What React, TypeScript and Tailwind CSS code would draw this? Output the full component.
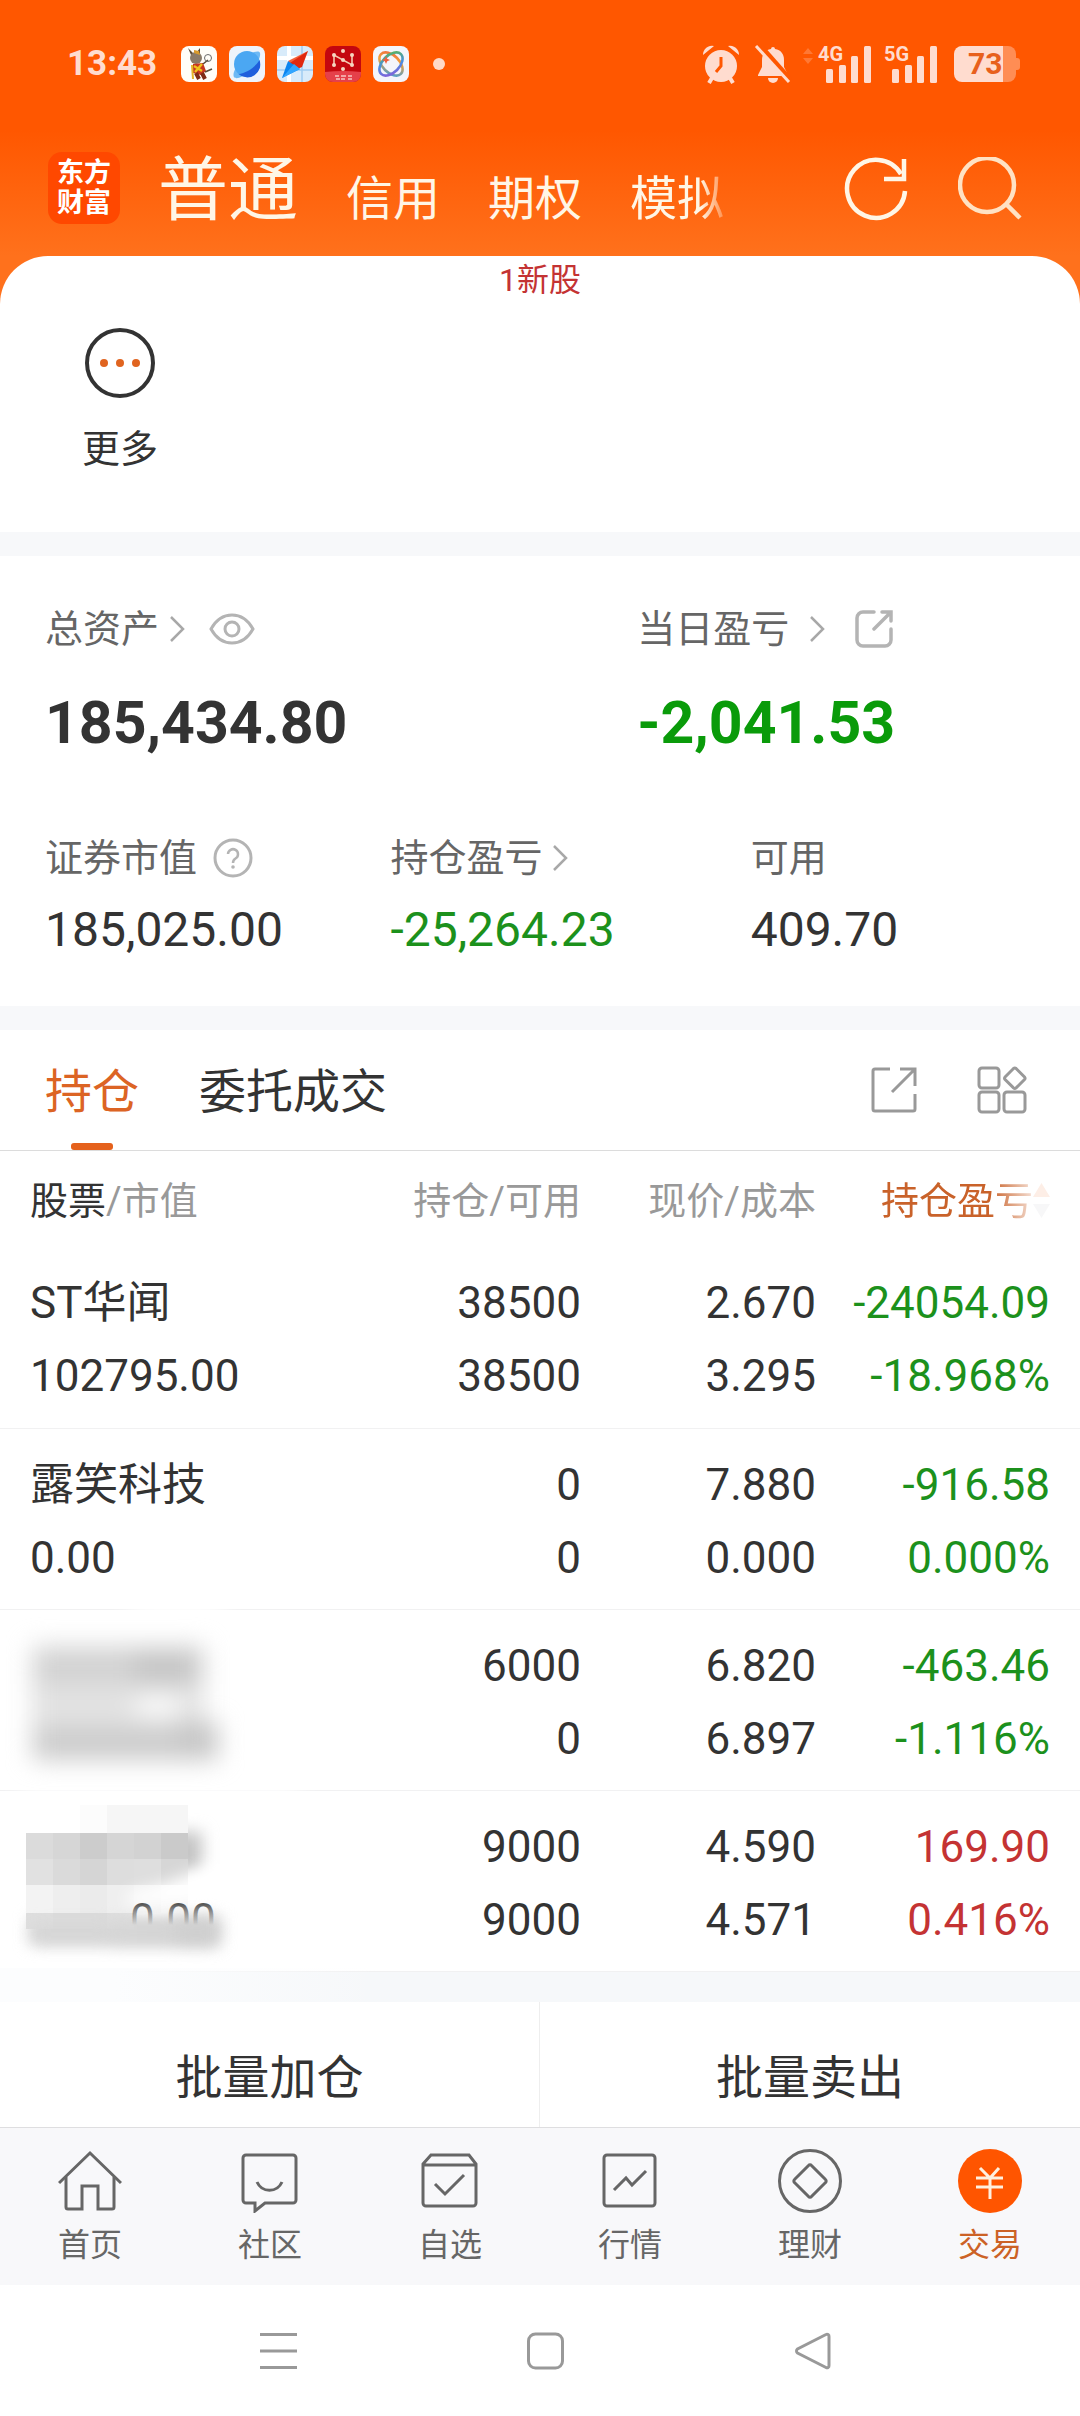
import { useState, type ReactNode } from "react";

interface Holding {
  id: string;
  name?: string;
  marketValue?: string;
  position: string;
  available: string;
  price: string;
  cost: string;
  profit: string;
  profitRate: string;
  up: boolean;
}

const HOLDINGS: Holding[] = [
  {
    id: "st-huawen",
    name: "ST华闻",
    marketValue: "102795.00",
    position: "38500",
    available: "38500",
    price: "2.670",
    cost: "3.295",
    profit: "-24054.09",
    profitRate: "-18.968%",
    up: false,
  },
  {
    id: "luxiao",
    name: "露笑科技",
    marketValue: "0.00",
    position: "0",
    available: "0",
    price: "7.880",
    cost: "0.000",
    profit: "-916.58",
    profitRate: "0.000%",
    up: false,
  },
  {
    id: "hidden-1",
    position: "6000",
    available: "0",
    price: "6.820",
    cost: "6.897",
    profit: "-463.46",
    profitRate: "-1.116%",
    up: false,
  },
  {
    id: "hidden-2",
    position: "9000",
    available: "9000",
    price: "4.590",
    cost: "4.571",
    profit: "169.90",
    profitRate: "0.416%",
    up: true,
  },
];

const ACCOUNT_TABS = ["信用", "期权", "模拟"];

/* ---------- small icons ---------- */

function Chevron() {
  return (
    <svg width="16" height="28" viewBox="0 0 16 28" fill="none" stroke="#a8a8a8" strokeWidth="2.5">
      <path d="M2 2l12 12L2 26" />
    </svg>
  );
}

function EyeIcon() {
  return (
    <svg width="46" height="32" viewBox="0 0 46 32" fill="none" stroke="#b4b4b4" strokeWidth="3">
      <path d="M2 16C7 7 14 2 23 2s16 5 21 14c-5 9-12 14-21 14S7 25 2 16z" />
      <circle cx="23" cy="16" r="7" />
    </svg>
  );
}

function ShareIcon({ rounded = false }: { rounded?: boolean }) {
  if (rounded) {
    return (
      <svg
        width="38"
        height="38"
        viewBox="0 0 38 38"
        fill="none"
        stroke="#b4b4b4"
        strokeWidth="3.5"
        strokeLinecap="round"
      >
        <path d="M19 2H8a6 6 0 0 0-6 6v22a6 6 0 0 0 6 6h22a6 6 0 0 0 6-6V19" />
        <path d="M27 2h9v9M36 2L19 19" />
      </svg>
    );
  }
  return (
    <svg width="46" height="46" viewBox="0 0 46 46" fill="none" stroke="#999" strokeWidth="3">
      <path d="M19 2H4a2 2 0 0 0-2 2v38a2 2 0 0 0 2 2h38a2 2 0 0 0 2-2V27" />
      <path d="M29 2h15v17M44 2L21 25" />
    </svg>
  );
}

function GridIcon() {
  return (
    <svg width="50" height="48" viewBox="0 0 50 48" fill="none" stroke="#999" strokeWidth="3">
      <rect x="2" y="2" width="20" height="20" rx="3" />
      <rect x="2" y="26" width="20" height="20" rx="3" />
      <rect x="27" y="26" width="21" height="20" rx="3" />
      <path d="M36.5 2.5a2 2 0 0 1 2.6 0l8.4 8.4a2 2 0 0 1 0 2.6l-8.4 8.4a2 2 0 0 1-2.6 0l-8.4-8.4a2 2 0 0 1 0-2.6z" />
    </svg>
  );
}

function HelpIcon() {
  return (
    <svg width="40" height="40" viewBox="0 0 40 40" fill="none" stroke="#b4b4b4" strokeWidth="3">
      <circle cx="20" cy="20" r="18" />
      <path d="M15 16a5 5 0 1 1 7.5 4.5c-1.7 1-2.5 2-2.5 4.5" strokeWidth="2.5" />
      <circle cx="20" cy="29" r="1.8" fill="#b4b4b4" stroke="none" />
    </svg>
  );
}

/* ---------- status bar ---------- */

function AppTiles() {
  return (
    <svg width="266" height="38" viewBox="0 0 266 38">
      <defs>
        <linearGradient id="knotA" x1="0" y1="0" x2="1" y2="1">
          <stop offset="0" stopColor="#f0603f" />
          <stop offset="0.4" stopColor="#f2a33a" />
          <stop offset="1" stopColor="#2f9be8" />
        </linearGradient>
        <linearGradient id="knotB" x1="1" y1="0" x2="0" y2="1">
          <stop offset="0" stopColor="#58b947" />
          <stop offset="0.5" stopColor="#4a8fe0" />
          <stop offset="1" stopColor="#8f55d8" />
        </linearGradient>
      </defs>
      {/* mascot */}
      <rect x="0" y="1" width="36" height="36" rx="8" fill="#fffdf8" />
      <path d="M10 10l-3-7 5 5 4-1 3-4 0 7z" fill="#5a4a35" />
      <ellipse cx="15" cy="13" rx="6" ry="6" fill="#8a7a68" />
      <path d="M13 5l5 1 1 4-6-2z" fill="#d89a2c" />
      <path d="M12 19l10-1 3 8-5 4-8-2z" fill="#c8371f" />
      <path d="M13 21l8 5M21 19l-7 8" stroke="#f0c31c" strokeWidth="2.4" />
      <path d="M15 28l3 6M21 28l3 6" stroke="#7d2b16" strokeWidth="4" />
      <path d="M11 20l1 14" stroke="#e5b72a" strokeWidth="2" />
      <path d="M22 19l5-4M24 27l7-3" stroke="#5a4a35" strokeWidth="1.6" />
      <circle cx="27" cy="13" r="3.5" fill="none" stroke="#6b6b6b" strokeWidth="1" />
      {/* planet */}
      <rect x="48" y="1" width="36" height="36" rx="8" fill="#eef4fb" />
      <path d="M53 32c-2-3 2-12 10-19s16-8 16-5c1 4-3 12-10 18s-14 9-16 6z" fill="#6db9f5" />
      <circle cx="66" cy="19" r="13" fill="#4ba7f2" />
      <path d="M78.5 15a13 13 0 0 1-21 14c8-1 17-7 21-14z" fill="#1f5fdc" />
      {/* compass */}
      <rect x="96" y="1" width="36" height="36" rx="8" fill="#d8ebfa" />
      <path d="M108 1v36M96 13h36" stroke="#fff" strokeWidth="4" />
      <path d="M121 1v36M96 25h36" stroke="#9fcdf2" strokeWidth="1.5" />
      <path d="M127 6l-20 10 7 8z" fill="#f4603a" />
      <path d="M127 6l-6 16-7 3-5-7z" fill="#e0280f" />
      <path d="M101 33l6-17 12 8z" fill="#0a85f0" />
      <path d="M101 33l18-9-6-5z" fill="#32a6ff" />
      {/* network */}
      <rect x="144" y="1" width="36" height="36" rx="8" fill="#c4070f" />
      <path d="M144 27q18-2 36 0v2a8 8 0 0 1-8 8h-20a8 8 0 0 1-8-8z" fill="#e5404a" />
      <path d="M153 20V10l18 10V10" fill="none" stroke="#f6c9b0" strokeWidth="1.6" />
      <g fill="#f6d5c0">
        <circle cx="153" cy="10" r="2" />
        <circle cx="153" cy="20" r="2" />
        <circle cx="171" cy="10" r="2" />
        <circle cx="171" cy="20" r="2" />
        <circle cx="162" cy="6" r="2" />
        <circle cx="162" cy="15" r="2" />
        <circle cx="162" cy="24" r="2" />
      </g>
      <path d="M154 31h4M155 34h4M160 31h5M160 34h4M167 31h4M167 34h4" stroke="#f8c4c0" strokeWidth="1.6" />
      {/* knot */}
      <rect x="192" y="1" width="36" height="36" rx="8" fill="#f4f5fb" />
      <g fill="none" strokeWidth="2.6">
        <ellipse cx="210" cy="19" rx="14" ry="8.5" transform="rotate(45 210 19)" stroke="url(#knotA)" />
        <ellipse cx="210" cy="19" rx="14" ry="8.5" transform="rotate(-45 210 19)" stroke="url(#knotB)" />
      </g>
      <path d="M205 11l1.2 2.8 2.8 1.2-2.8 1.2-1.2 2.8-1.2-2.8-2.8-1.2 2.8-1.2z" fill="#f0603f" />
      <circle cx="258" cy="19" r="6" fill="#ffd9c7" />
    </svg>
  );
}

function SignalBars({ label }: { label: string }) {
  return (
    <div className="relative h-[38px] w-[54px]">
      <span className="absolute top-0 left-0 text-[20px] leading-[18px] font-bold">{label}</span>
      <svg className="absolute right-0 bottom-0" width="46" height="38" viewBox="0 0 46 38" fill="currentColor">
        <rect x="0" y="24" width="7" height="14" rx="1.5" />
        <rect x="13" y="20" width="7" height="18" rx="1.5" />
        <rect x="25" y="11" width="7" height="27" rx="1.5" />
        <rect x="38" y="1" width="7" height="37" rx="1.5" />
      </svg>
    </div>
  );
}

function StatusBar() {
  return (
    <div className="flex h-[128px] items-center justify-between pr-[60px] pl-[67px] text-[#ffdccf]">
      <div className="flex items-center">
        <time className="w-[114px] text-[35px] leading-[40px] font-bold">13:43</time>
        <AppTiles />
      </div>
      <div className="flex items-center">
        <svg width="38" height="40" viewBox="0 0 38 40" fill="currentColor">
          <circle cx="19" cy="22" r="16" />
          <path d="M1 11a9 9 0 0 1 11-9zM37 11a9 9 0 0 0-11-9z" />
          <path d="M10 34l-3 5M28 34l3 5" stroke="currentColor" strokeWidth="4" />
          <path d="M19 13v9l-5 6" fill="none" stroke="#ff5700" strokeWidth="3" />
        </svg>
        <svg className="ml-3.5" width="38" height="38" viewBox="0 0 38 38" fill="currentColor">
          <path d="M19 2a2 2 0 0 1 2 2c6 1 9 5 9 11v7l4 8v1H4v-1l4-8v-7c0-6 3-10 9-11a2 2 0 0 1 2-2z" />
          <path d="M14 33h10a5 5 0 0 1-10 0z" />
          <path d="M5 0l31 35" stroke="#ff5700" strokeWidth="6" />
          <path d="M2 1l33 36" stroke="currentColor" strokeWidth="3" />
        </svg>
        <svg className="mb-4 ml-2.5 opacity-25" width="12" height="16" viewBox="0 0 12 16" fill="currentColor">
          <path d="M6 0l5 6H1zM6 16l5-6H1z" />
        </svg>
        <div className="ml-1 flex gap-3">
          <SignalBars label="4G" />
          <SignalBars label="5G" />
        </div>
        <div className="relative ml-4 h-9 w-[66px]">
          <svg width="66" height="36" viewBox="0 0 66 36">
            <path d="M48 0h6a8 8 0 0 1 8 8v20a8 8 0 0 1-8 8h-6z" fill="#ff8d54" />
            <path d="M62 12h1a3 3 0 0 1 3 3v6a3 3 0 0 1-3 3h-1z" fill="#ff8d54" />
            <path d="M8 0h41v36H8a8 8 0 0 1-8-8V8a8 8 0 0 1 8-8z" fill="#ffdccf" />
          </svg>
          <span className="absolute inset-y-0 left-3.5 text-[30px] leading-[36px] font-bold text-[#e8601c]">
            73
          </span>
        </div>
      </div>
    </div>
  );
}

/* ---------- header ---------- */

function Header() {
  return (
    <header className="flex h-[128px] items-center pr-[58px] pb-2 pl-12 text-[#fff6e6]">
      <div className="flex size-[72px] flex-col items-center justify-center rounded-[14px] bg-[#ff4800] text-[27px] leading-[30px] font-bold text-white">
        <span>东方</span>
        <span>财富</span>
      </div>
      <nav className="ml-[38px] flex flex-1 items-baseline gap-12 pt-3.5">
        <button className="text-[70px] leading-[88px]">普通</button>
        {ACCOUNT_TABS.map((tab) => (
          <button
            key={tab}
            className="text-[47px] leading-[88px] last:[mask-image:linear-gradient(90deg,#000_75%,transparent_110%)]"
          >
            {tab}
          </button>
        ))}
      </nav>
      <div className="flex items-center gap-[50px] pt-0.5">
        <button aria-label="刷新">
          <svg width="64" height="64" viewBox="0 0 64 64" fill="none" stroke="currentColor" strokeWidth="4.5">
            <path d="M61 34A29 29 0 1 1 57 17" />
            <path d="M60 2v20H40" />
          </svg>
        </button>
        <button aria-label="搜索">
          <svg width="64" height="64" viewBox="0 0 64 64" fill="none" stroke="#ffe2c4" strokeWidth="4.5">
            <circle cx="29" cy="28" r="27" />
            <path d="M48 47l14 14" />
          </svg>
        </button>
      </div>
    </header>
  );
}

/* ---------- assets ---------- */

function AssetLabel({ children }: { children: ReactNode }) {
  return <div className="flex h-[46px] items-center text-[38px] leading-[46px] text-[#666]">{children}</div>;
}

function Assets() {
  return (
    <section className="pt-[50px] pr-12 pb-11 pl-[45px]">
      <div className="grid grid-cols-[60%_40%]">
        <div>
          <AssetLabel>
            <span>总资产</span>
            <span className="ml-2.5">
              <Chevron />
            </span>
            <button className="ml-6" aria-label="隐藏金额">
              <EyeIcon />
            </button>
          </AssetLabel>
          <p className="mt-[39px] text-[59px] leading-[64px] font-bold text-[#333]">185,434.80</p>
        </div>
        <div>
          <AssetLabel>
            <span>当日盈亏</span>
            <span className="ml-5">
              <Chevron />
            </span>
            <button className="ml-[30px]" aria-label="分享">
              <ShareIcon rounded />
            </button>
          </AssetLabel>
          <p className="mt-[39px] text-[59px] leading-[64px] font-bold text-[#0a9b0a]">-2,041.53</p>
        </div>
      </div>
      <div className="mt-20 grid grid-cols-[35%_36.5%_auto] text-[48px] leading-[64px] text-[#333]">
        <div>
          <AssetLabel>
            <span>证券市值</span>
            <button className="ml-4" aria-label="说明">
              <HelpIcon />
            </button>
          </AssetLabel>
          <p className="mt-[17px]">185,025.00</p>
        </div>
        <div>
          <AssetLabel>
            <span>持仓盈亏</span>
            <span className="ml-2.5">
              <Chevron />
            </span>
          </AssetLabel>
          <p className="mt-[17px] text-[#1c911c]">-25,264.23</p>
        </div>
        <div>
          <AssetLabel>可用</AssetLabel>
          <p className="mt-[17px]">409.70</p>
        </div>
      </div>
    </section>
  );
}

/* ---------- holdings ---------- */

// Mosaic and smudges laid over the names of the hidden holdings
const MOSAIC: { y: number; h: number; fills: string[] }[] = [
  { y: 213, h: 28, fills: ["#ffffff", "#ffffff", "#fcfcfc", "#f6f6f6", "#f6f6f6", "#f6f6f6"] },
  { y: 241, h: 26, fills: ["#dbdbdb", "#d6d6d6", "#cccccc", "#d5d5d5", "#d2d2d2", "#cacaca"] },
  { y: 267, h: 26, fills: ["#e1e1e1", "#dadada", "#d5d5d5", "#dddddd", "#dedede", "#d6d6d6"] },
  { y: 293, h: 28, fills: ["#f3f3f3", "#eeeeee", "#ebebeb", "#efefef", "#f2f2f2", "#f6f6f6"] },
  { y: 321, h: 16, fills: ["#dedede", "#dbdbdb", "#dbdbdb", "#dedede"] },
];

function Redaction() {
  return (
    <svg
      className="pointer-events-none absolute bottom-0 left-0"
      width="380"
      height="410"
      viewBox="0 0 380 410"
      aria-hidden="true"
    >
      <defs>
        <filter id="soft" x="-40%" y="-100%" width="180%" height="300%" colorInterpolationFilters="sRGB">
          <feGaussianBlur stdDeviation="12" />
        </filter>
        <filter id="edge" x="-40%" y="-100%" width="180%" height="300%" colorInterpolationFilters="sRGB">
          <feGaussianBlur stdDeviation="8" />
        </filter>
        <linearGradient id="digits" x1="0" y1="312" x2="0" y2="333" gradientUnits="userSpaceOnUse">
          <stop offset="0" stopColor="#444" stopOpacity="0.9" />
          <stop offset="1" stopColor="#444" stopOpacity="0" />
        </linearGradient>
        <linearGradient id="bandFade" x1="0" y1="0" x2="1" y2="0">
          <stop offset="0.3" stopColor="#fcfdfe" />
          <stop offset="1" stopColor="#fcfdfe" stopOpacity="0" />
        </linearGradient>
      </defs>
      <rect x="0" y="376" width="380" height="34" fill="url(#bandFade)" />
      <g filter="url(#soft)">
        <rect x="130" y="8" width="95" height="30" fill="#fff" />
        <rect x="20" y="190" width="280" height="24" fill="#fff" />
      </g>
      <g filter="url(#soft)">
        <rect x="32" y="54" width="172" height="112" fill="#e2e2e2" />
        <rect x="34" y="56" width="168" height="36" fill="#d2d2d2" />
        <rect x="134" y="60" width="62" height="30" fill="#c4c4c4" />
        <rect x="34" y="136" width="184" height="32" fill="#cbcbcb" />
        <rect x="180" y="130" width="38" height="36" fill="#c6c6c6" />
        <ellipse cx="158" cy="114" rx="26" ry="10" fill="#fff" />
      </g>
      <g filter="url(#edge)">
        <path d="M160 240h42v40h-42z" fill="#c4c4c4" />
        <rect x="30" y="326" width="190" height="26" fill="#d4d4d4" />
      </g>
      {MOSAIC.map((row) =>
        row.fills.map((fill, i) => (
          <rect key={`${row.y}-${i}`} x={26 + i * 27} y={row.y} width="27" height={row.h} fill={fill} />
        )),
      )}
      <g filter="url(#edge)">
        <path d="M126 302l32-8 36-14 34-14-2 32-42 12-56 4z" fill="#fff" />
        <rect x="110" y="330" width="108" height="22" fill="#d4d4d4" />
        <rect x="176" y="326" width="42" height="28" fill="#cfcfcf" />
        <rect x="32" y="334" width="110" height="16" fill="#d6d6d6" />
      </g>
      <text x="130" y="343" fontSize="44" fill="url(#digits)">
        0.00
      </text>
    </svg>
  );
}

function HoldingsTable() {
  return (
    <div className="relative">
      <table className="w-full table-fixed border-collapse text-right text-[#333]">
        <colgroup>
          <col className="w-[31%]" />
          <col />
          <col className="w-[235px]" />
          <col className="w-[264px]" />
        </colgroup>
        <thead className="text-[38px] leading-[46px] text-[#999]">
          <tr className="h-24">
            <th className="pt-1 pl-[30px] text-left font-normal">
              <span className="text-[#333]">股票</span>/市值
            </th>
            <th className="pt-1 font-normal">持仓/可用</th>
            <th className="pt-1 font-normal">现价/成本</th>
            <th className="pt-1 pr-[30px] font-normal">
              <button className="flex w-full items-center justify-end text-[#c9622a]">
                <span className="[mask-image:linear-gradient(90deg,#000_72%,rgba(0,0,0,0.2)_100%)]">持仓盈亏</span>
                <svg width="17" height="36" viewBox="0 0 17 36">
                  <path d="M8.5 0L17 14H0z" fill="#fdeee6" />
                  <path d="M8.5 35L17 21H0z" fill="#f7f7f8" />
                </svg>
              </button>
            </th>
          </tr>
        </thead>
        <tbody className="text-[44px] leading-[73px]">
          {HOLDINGS.map((item) => (
            <tr key={item.id} className="h-[181px] border-b border-[#f1f1f2]">
              <td className="pt-1.5 pl-[30px] text-left">
                <div>{item.name}</div>
                <div>{item.marketValue}</div>
              </td>
              <td className="pt-1.5">
                <div>{item.position}</div>
                <div>{item.available}</div>
              </td>
              <td className="pt-1.5">
                <div>{item.price}</div>
                <div>{item.cost}</div>
              </td>
              <td className={item.up ? "pt-1.5 pr-[30px] text-[#c43333]" : "pt-1.5 pr-[30px] text-[#1c911c]"}>
                <div>{item.profit}</div>
                <div>{item.profitRate}</div>
              </td>
            </tr>
          ))}
        </tbody>
      </table>
      <div className="h-[30px] bg-[#f6f8fa]" />
      <Redaction />
    </div>
  );
}

function Holdings() {
  const [tab, setTab] = useState("持仓");

  return (
    <section>
      <div className="flex h-[121px] items-stretch border-b border-[#dcdcdc] pr-[53px] pl-[45px]">
        <div className="flex flex-1 gap-[60px]">
          {["持仓", "委托成交"].map((name) => (
            <button
              key={name}
              onClick={() => setTab(name)}
              className={
                tab === name
                  ? "relative pt-1 text-[47px] leading-[60px] text-[#dc6424]"
                  : "relative pt-1 text-[47px] leading-[60px] text-[#333]"
              }
            >
              {name}
              {tab === name && (
                <span className="absolute bottom-0 left-1/2 h-[7px] w-[42px] -translate-x-1/2 rounded-[3px] bg-[#e5611c]" />
              )}
            </button>
          ))}
        </div>
        <div className="flex items-center gap-[60px]">
          <button aria-label="分享持仓">
            <ShareIcon />
          </button>
          <button aria-label="更多功能">
            <GridIcon />
          </button>
        </div>
      </div>
      <HoldingsTable />
      <div className="grid h-[125px] grid-cols-2 text-[47px] leading-[60px] text-[#333]">
        <button className="border-r border-[#eee] pt-7">批量加仓</button>
        <button className="pt-7">批量卖出</button>
      </div>
    </section>
  );
}

/* ---------- bottom navigation ---------- */

const NAV_ITEMS: { label: string; active?: boolean; icon: ReactNode }[] = [
  {
    label: "首页",
    icon: (
      <>
        <path d="M1 34L32 4l31 30" />
        <path d="M8 28v30a2 2 0 0 0 2 2h14V37h16v23h14a2 2 0 0 0 2-2V28" />
      </>
    ),
  },
  {
    label: "社区",
    icon: (
      <>
        <path d="M8 6h47a3 3 0 0 1 3 3v42a3 3 0 0 1-3 3H27l-10 8V54H8a3 3 0 0 1-3-3V9a3 3 0 0 1 3-3z" />
        <path d="M19 33c5 11 20 11 25 0" />
      </>
    ),
  },
  {
    label: "自选",
    icon: (
      <>
        <path d="M5 15l8-9h38l7 9v39a3 3 0 0 1-3 3H8a3 3 0 0 1-3-3zM5 16h53" />
        <path d="M17 35l10 10 19-19" />
      </>
    ),
  },
  {
    label: "行情",
    icon: (
      <>
        <rect x="6" y="6" width="51" height="51" rx="3" />
        <path d="M16 41l12-12 6 7 14-14" />
      </>
    ),
  },
  {
    label: "理财",
    icon: (
      <>
        <circle cx="32" cy="32" r="30.5" />
        <path d="M30.5 16.5a2 2 0 0 1 3 0l14 14a2 2 0 0 1 0 3l-14 14a2 2 0 0 1-3 0l-14-14a2 2 0 0 1 0-3z" />
      </>
    ),
  },
  {
    label: "交易",
    active: true,
    icon: (
      <>
        <circle cx="32" cy="32" r="32" fill="#ff5500" stroke="none" />
        <path d="M22 19l10 10 9-10M32 29v21M18 29h27M18 38h27" stroke="#fff0df" />
      </>
    ),
  },
];

function TabBar() {
  return (
    <nav className="grid grid-cols-6 border-t border-[#dedee0] bg-[#f8f8fa] pt-[21px] pb-5">
      {NAV_ITEMS.map((item) => (
        <a
          key={item.label}
          href="#"
          className={
            item.active
              ? "flex flex-col items-center gap-3 text-[#cc6226]"
              : "flex flex-col items-center gap-3 text-[#666]"
          }
        >
          <svg width="64" height="64" viewBox="0 0 64 64" fill="none" stroke="currentColor" strokeWidth="3">
            {item.icon}
          </svg>
          <span className="text-[32px] leading-[40px]">{item.label}</span>
        </a>
      ))}
    </nav>
  );
}

function SystemBar() {
  return (
    <div className="flex h-[132px] items-center justify-center gap-[230px] pl-2.5">
      <button aria-label="最近任务">
        <svg width="37" height="38" viewBox="0 0 37 38" stroke="#999" strokeWidth="3">
          <path d="M0 2.5h37M0 19h37M0 35.5h37" />
        </svg>
      </button>
      <button aria-label="主屏幕">
        <svg width="37" height="38" viewBox="0 0 37 38" fill="none" stroke="#999" strokeWidth="3">
          <rect x="1.5" y="2" width="34" height="34" rx="7" />
        </svg>
      </button>
      <button aria-label="返回">
        <svg width="37" height="38" viewBox="0 0 37 38" fill="none" stroke="#999" strokeWidth="3">
          <path d="M32 2.5L3.5 17a2.5 2.5 0 0 0 0 4L32 35.5a2 2 0 0 0 3-2v-29a2 2 0 0 0-3-2z" />
        </svg>
      </button>
    </div>
  );
}

export default function App() {
  return (
    <div className="min-h-screen w-full bg-white font-['Roboto','Noto_Sans_CJK_SC',sans-serif]">
      <div className="bg-[linear-gradient(180deg,#ff5700_130px,#ff711c_256px)]">
        <StatusBar />
        <Header />
        <section className="rounded-t-[48px] bg-white pb-[60px]">
          <p className="text-center text-[32px] leading-[48px] text-[#c43333]">1新股</p>
          <button className="mt-6 ml-12 flex w-[144px] flex-col items-center gap-7 text-[#333]">
            <svg width="70" height="70" viewBox="0 0 70 70">
              <circle cx="35" cy="35" r="33" fill="none" stroke="#333" strokeWidth="4" />
              <g fill="#e0641f">
                <circle cx="19" cy="35" r="4" />
                <circle cx="35" cy="35" r="4" />
                <circle cx="51" cy="35" r="4" />
              </g>
            </svg>
            <span className="text-[38px] leading-[46px]">更多</span>
          </button>
        </section>
      </div>
      <div className="h-6 bg-[#f7f8fa]" />
      <Assets />
      <div className="h-6 bg-[#f7f8fa]" />
      <Holdings />
      <TabBar />
      <SystemBar />
    </div>
  );
}
